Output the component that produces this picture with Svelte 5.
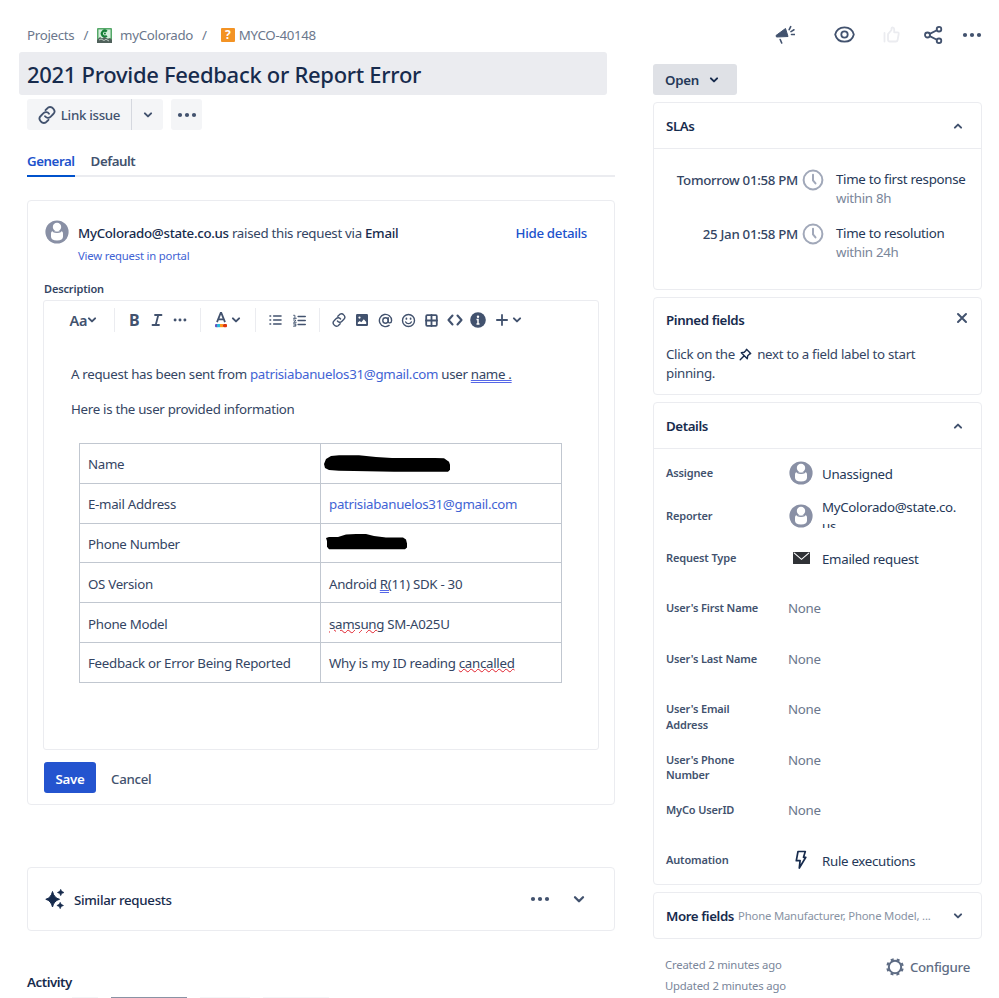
<script>
    const rows = [
        { label: 'Name', redacted: 'name' },
        { label: 'E-mail Address', mail: 'patrisiabanuelos31@gmail.com' },
        { label: 'Phone Number', redacted: 'phone' },
        { label: 'OS Version', before: 'Android ', grammar: 'R(', after: '11) SDK - 30' },
        { label: 'Phone Model', spelling: 'samsung', after: ' SM-A025U' },
        { label: 'Feedback or Error Being Reported', before: 'Why is my ID reading ', spelling: 'cancalled' }
    ];

    const slas = [
        { due: 'Tomorrow 01:58 PM', name: 'Time to first response', goal: 'within 8h' },
        { due: '25 Jan 01:58 PM', name: 'Time to resolution', goal: 'within 24h' }
    ];

    const details = [
        { label: 'Assignee', value: 'Unassigned', icon: 'avatar', short: true },
        { label: 'Reporter', value: 'MyColorado@state.co.us', icon: 'avatar', short: true, clipped: true },
        { label: 'Request Type', value: 'Emailed request', icon: 'mail' },
        { label: "User's First Name" },
        { label: "User's Last Name" },
        { label: "User's Email Address" },
        { label: "User's Phone Number" },
        { label: 'MyCo UserID' },
        { label: 'Automation', value: 'Rule executions', icon: 'bolt' }
    ];
</script>

{#snippet chevron(up = false)}
    <svg class="icon chevron" class:up width="10" height="8" viewBox="0 0 10 8"><path d="M1.9 2.4 5 5.4l3.1-3" /></svg>
{/snippet}

{#snippet dots(w = 20)}
    <svg width={w} height="6" viewBox="0 0 20 6" fill="currentColor"><circle cx="3" cy="3" r="2.1" /><circle cx="10" cy="3" r="2.1" /><circle cx="17" cy="3" r="2.1" /></svg>
{/snippet}

{#snippet avatar()}
    <svg width="24" height="24" viewBox="0 0 24 24">
        <circle cx="12" cy="12" r="11.6" fill="#8990a5" />
        <circle cx="12" cy="7" r="4.2" fill="#fff" />
        <path d="M6 13.2q0-1.9 1.9-1.9h8.2q1.9 0 1.9 1.9v3.6Q18 20.5 12 20.5T6 16.8z" fill="#fff" />
        <path d="M8 11.400Q12 13.200 16 11.400" fill="none" stroke="#8990a5" stroke-width="1.200" />
    </svg>
{/snippet}

{#snippet link(size)}
    <svg class="icon" width={size} height={size} viewBox="0 0 18 18">
        <path d="m7.5 4.2 1.7-1.7a3.6 3.6 0 0 1 5.8-.1l.6.7a3.6 3.6 0 0 1-.3 4.9l-2.8 2.8a3.6 3.6 0 0 1-5.5-.5" />
        <path d="m10.5 13.8-1.7 1.7a3.6 3.6 0 0 1-5.8.1l-.6-.7A3.6 3.6 0 0 1 2.7 10l2.8-2.8a3.6 3.6 0 0 1 5.5.5" />
    </svg>
{/snippet}

<div class="page">
    <main>
        <nav class="crumbs">
            <span>Projects</span><span class="slash">/</span>
            <svg class="project" width="15" height="15" viewBox="0 0 15 15">
                <rect width="15" height="15" rx="1" fill="#55a868" />
                <rect x="1.5" y="1.5" width="12" height="9" fill="#d4efdc" />
                <path d="M9.800 3.500A2.900 2.900 0 1 0 9.800 7.700" fill="none" stroke="#168039" stroke-width="2.200" />
                <circle cx="7.9" cy="5.600" r="1" fill="#168039" />
                <path d="M0 12 3 9l2 1.5L7.5 9 11 11l2-1 2 2v3H0z" fill="#50615b" />
                <path d="m2 12 2-1 3 1.5 2-1.2 3 1.7" stroke="#b9c8c1" fill="none" />
            </svg>
            <span>myColorado</span><span class="slash second">/</span>
            <span class="question">?</span>
            <span>MYCO-40148</span>
        </nav>

        <h1>2021 Provide Feedback or Report Error</h1>

        <div class="actions">
            <button class="link-issue">{@render link(18)}<span>Link issue</span></button>
            <button class="split">{@render chevron()}</button>
            <button class="more">{@render dots()}</button>
        </div>

        <div class="tabs">
            <span class="tab active">General</span>
            <span class="tab">Default</span>
        </div>

        <section class="request">
            <header>
                {@render avatar()}
                <div class="raised">
                    <div class="by"><b>MyColorado@state.co.us</b> raised this request via <b>Email</b></div>
                    <div class="portal">View request in portal</div>
                </div>
                <span class="hide">Hide details</span>
            </header>

            <div class="description">Description</div>
            <div class="editor">
                <div class="toolbar">
                    <div class="cell format"><span>Aa</span>{@render chevron()}</div>
                    <i class="sep"></i>
                    <div class="cell"><span class="bold">B</span></div>
                    <div class="cell">
                        <svg class="icon" width="12" height="14" viewBox="0 0 12 14"><path d="M4 2h6.500M1.500 12H8M7.300 2 4.700 12" /></svg>
                    </div>
                    <div class="cell">{@render dots(14)}</div>
                    <i class="sep"></i>
                    <div class="cell color">
                        <svg width="12" height="16" viewBox="0 0 12 16">
                            <path d="M2 10.200 5.700 1h.6L10 10.200M3.200 7.300h5.600" fill="none" stroke="#42526e" stroke-width="1.800" />
                            <rect x="0" y="12" width="3" height="3.200" rx="1" fill="#6554c0" />
                            <rect x="2" y="12" width="3" height="3.200" fill="#2bb7d9" />
                            <rect x="5" y="12" width="3" height="3.200" fill="#ff991f" />
                            <rect x="8" y="12" width="4" height="3.200" rx="1" fill="#de350b" />
                        </svg>
                    </div>
                    <div class="cell drop a-drop">{@render chevron()}</div>
                    <i class="sep"></i>
                    <div class="cell">
                        <svg class="icon list" width="13" height="12" viewBox="0 0 13 12"><path d="M4.700 2H12M4.700 6H12M4.700 10H12M1 2h.6M1 6h.6M1 10h.6" /></svg>
                    </div>
                    <div class="cell">
                        <svg class="icon list" width="13" height="13" viewBox="0 0 13 13"><path d="M5.200 2.500h7M5.200 6.500h7M5.200 10.500h7" /><path d="M.6 1.300h1.300v3M.5 4.300h2.800M.5 6h2v1L.6 8.300h2.600M.5 9.800h2.300v2.400H.5M1.200 11h1.500" stroke-width=".9" /></svg>
                    </div>
                    <i class="sep"></i>
                    <div class="cell">{@render link(14)}</div>
                    <div class="cell">
                        <svg width="12" height="12" viewBox="0 0 12 12"><rect width="12" height="12" rx="1.200" fill="#42526e" /><circle cx="3.500" cy="3.600" r="1.100" fill="#fff" /><path d="M1.800 10V8.500L3.800 7l1.500 1.200 2.500-2.900L10.200 8v2z" fill="#fff" /></svg>
                    </div>
                    <div class="cell">
                        <svg class="icon thin" width="15" height="15" viewBox="0 0 15 15"><circle cx="7.500" cy="7.500" r="2.700" /><path d="M10.200 4.800v3.400c0 2.300 3.400 2.300 3.400-.7a6.100 6.100 0 1 0-2.500 4.900" /></svg>
                    </div>
                    <div class="cell">
                        <svg class="icon thin" width="15" height="15" viewBox="0 0 15 15"><circle cx="7.500" cy="7.500" r="6" /><path d="M4.700 9c1 2.200 4.600 2.200 5.600 0" /><path d="M5.400 5.300v.6M9.600 5.300v.6" stroke-width="1.700" /></svg>
                    </div>
                    <div class="cell">
                        <svg class="icon" width="13" height="13" viewBox="0 0 13 13"><rect x="1.200" y="1.200" width="10.600" height="10.600" rx="1" /><path d="M6.500 1v11M1 6.500h11" /></svg>
                    </div>
                    <div class="cell">
                        <svg class="icon code" width="16" height="12" viewBox="0 0 16 12"><path d="M5.500 1.500 1.500 6l4 4.500M10.500 1.500l4 4.500-4 4.500" /></svg>
                    </div>
                    <div class="cell">
                        <svg width="16" height="16" viewBox="0 0 16 16"><circle cx="8" cy="8" r="7.800" fill="#42526e" /><circle cx="8" cy="4.700" r="1.200" fill="#fff" /><path d="M6.500 7.500H8V12M6.500 12h3" fill="none" stroke="#fff" stroke-width="1.500" /></svg>
                    </div>
                    <div class="cell">
                        <svg class="icon" width="12" height="12" viewBox="0 0 12 12"><path d="M6 .9v10.200M.9 6h10.200" /></svg>
                    </div>
                    <div class="cell drop">{@render chevron()}</div>
                </div>

                <div class="content">
                    <p>A request has been sent from <span class="mail">patrisiabanuelos31@gmail.com</span> user <span class="grammar">name .</span></p>
                    <p>Here is the user provided information</p>
                    <table>
                        <tbody>
                            {#each rows as row}
                                <tr>
                                    <td>{row.label}</td>
                                    <td>
                                        {#if row.redacted === 'name'}
                                            <svg class="redact" width="126" height="18" viewBox="0 0 126 18"><path d="M0 9 2 4 7 1l8-.8h20L52 2l16 1h43l9 .2 5 3.500 1 3v5l-2 2H70L30 16l-15-.3L5 15l-4-2z" /></svg>
                                        {:else if row.redacted === 'phone'}
                                            <svg class="redact phone" width="81" height="16" viewBox="0 0 81 16"><path d="m0 4 3-1h9l8-2.500 10-.5h10l8 2 12 1.500h17l3 2 1 4v4l-2 1.700H3l-2-2.500V7z" /></svg>
                                        {:else if row.mail}
                                            <span class="mail">{row.mail}</span>
                                        {:else}
                                            {row.before ?? ''}{#if row.grammar}<span class="grammar">{row.grammar}</span>{/if}{#if row.spelling}<span class="spelling">{row.spelling}</span>{/if}{row.after ?? ''}
                                        {/if}
                                    </td>
                                </tr>
                            {/each}
                        </tbody>
                    </table>
                </div>
            </div>

            <div class="buttons">
                <button class="save">Save</button>
                <button class="cancel">Cancel</button>
            </div>
        </section>

        <section class="similar">
            <svg width="20" height="20" viewBox="0 0 20 20" fill="#172b4d">
                <path d="M7.500 2.500Q9 9 14.500 10.300 9 11.600 7.500 18 6 11.600.8 10.300 6 9 7.500 2.500z" stroke="#172b4d" stroke-linejoin="round" />
                <path d="M15.700.3q.4 2.700 3.300 3.200-2.900.5-3.300 3.200-.4-2.700-3.300-3.200 2.900-.5 3.300-3.200zM15.200 13.300q.4 2.700 3.300 3.200-2.900.5-3.300 3.200-.4-2.700-3.300-3.200 2.900-.5 3.300-3.200z" stroke="#172b4d" stroke-width=".6" />
            </svg>
            <span>Similar requests</span>
            <div class="similar-actions">
                {@render dots()}
                <svg class="icon" width="14" height="10" viewBox="0 0 14 10"><path d="m3 3.200 4 4 4-4" stroke-width="2.300" /></svg>
            </div>
        </section>

        <div class="activity">Activity</div>
        <div class="filters"><i></i><i class="selected"></i><i></i><i></i></div>
    </main>

    <aside>
        <div class="top-icons">
            <svg class="megaphone" width="20" height="20" viewBox="0 0 20 20">
                <path d="M10.500 3.500 13 11.500 1.500 12 1 10.500z" fill="#42526e" stroke="#42526e" stroke-linejoin="round" />
                <path d="m5.200 14.500 1.500 3.500M14.200 4.700 15.700 1.600M16 6.600l3-1.800M16.500 9.500h3" fill="none" stroke="#42526e" stroke-width="1.600" stroke-linecap="round" />
            </svg>
            <svg class="icon eye" width="21" height="17" viewBox="0 0 21 17"><path d="M1.200 8.500C2.300 4 6 1.300 10.500 1.300S18.700 4 19.800 8.500C18.700 13 15 15.700 10.500 15.700S2.300 13 1.200 8.500z" /><circle cx="10.500" cy="8.500" r="3.200" /></svg>
            <svg class="icon thumb" width="17" height="17" viewBox="0 0 17 17"><path d="M1.500 7v8.500M5 8.200 8.500 4V2.500q0-1.200 1.200-1.200 1.500.2 1.500 2v3h3.300q1.500.2 1.200 1.700l-1.100 6q-.3 1.500-1.600 1.500H6.700Q5 15.500 5 13.800z" /></svg>
            <svg class="icon share" width="19" height="18" viewBox="0 0 19 18"><circle cx="3.500" cy="9" r="2.500" /><circle cx="15" cy="3.200" r="2.300" /><circle cx="15" cy="14.800" r="2.300" /><path d="m5.700 7.900 7.200-3.600M5.700 10.100l7.200 3.600" /></svg>
            {@render dots()}
        </div>

        <button class="status">Open {@render chevron()}</button>

        <section class="panel slas">
            <div class="panel-head"><h2>SLAs</h2>{@render chevron(true)}</div>
            <div class="sla-list">
                {#each slas as sla}
                    <div class="sla">
                        <span class="due">{sla.due}</span>
                        <svg width="22" height="22" viewBox="0 0 22 22" fill="none" stroke="#a1a8b9"><circle cx="11" cy="11" r="9.400" stroke-width="2" /><path d="M11 5.800v5.600l2.500 3" stroke-width="2" stroke-linecap="round" /></svg>
                        <div class="goal"><div>{sla.name}</div><div class="within">{sla.goal}</div></div>
                    </div>
                {/each}
            </div>
        </section>

        <section class="panel pinned">
            <div class="pinned-head">
                <h2>Pinned fields</h2>
                <svg class="icon" width="12" height="12" viewBox="0 0 12 12"><path d="m2 2 8 8M10 2l-8 8" stroke-width="2" /></svg>
            </div>
            <p>Click on the <svg class="icon pin" width="13" height="13" viewBox="0 0 13 13"><path d="M7.500 1.300 11.700 5.500 10.600 6 8.700 7.800 8.300 10.700 2.300 4.700 5.200 4.300 7 2.400zM5.200 7.800 1.200 11.800" /></svg> next to a field label to start pinning.</p>
        </section>

        <section class="panel details">
            <div class="panel-head"><h2>Details</h2>{@render chevron(true)}</div>
            {#each details as field}
                <div class="field" class:short={field.short}>
                    <span class="label">{field.label}</span>
                    {#if field.value}
                        <span class="field-icon">
                            {#if field.icon === 'avatar'}
                                {@render avatar()}
                            {:else if field.icon === 'mail'}
                                <svg width="17" height="12" viewBox="0 0 17 12"><rect width="17" height="12" rx=".6" fill="#303236" /><path d="m1 .8 7.500 6.500L16 .8" fill="none" stroke="#fff" stroke-width="1.100" /></svg>
                            {:else}
                                <svg width="12" height="20" viewBox="0 0 12 20"><path d="M3 1.500h7.300L8.500 7.300h2.300L4.300 18l.8-7.300H1.300z" fill="none" stroke="#172b4d" stroke-width="1.700" stroke-linejoin="round" /></svg>
                            {/if}
                        </span>
                        <span class="value" class:clipped={field.clipped}>{field.value}</span>
                    {:else}
                        <span class="none">None</span>
                    {/if}
                </div>
            {/each}
        </section>

        <section class="panel more-fields">
            <h2>More fields</h2>
            <span>Phone Manufacturer, Phone Model, ...</span>
            {@render chevron()}
        </section>

        <footer>
            <div class="stamps"><div>Created 2 minutes ago</div><div>Updated 2 minutes ago</div></div>
            <div class="configure">
                <svg width="18" height="18" viewBox="0 0 18 18"><circle cx="9" cy="9" r="6.200" fill="none" stroke="#5e6c84" stroke-width="2" /><circle cx="9" cy="9" r="7.700" fill="none" stroke="#5e6c84" stroke-width="2.200" stroke-dasharray="3 3.047" stroke-dashoffset="-1.500" /></svg>
                <span>Configure</span>
            </div>
        </footer>
    </aside>
</div>

<style>
    :global(body) {
        background: #fff;
        overflow: hidden;
    }

    .page {
        display: flex;
        gap: 38px;
        width: 999px;
        height: 998px;
        overflow: hidden;
        box-sizing: border-box;
        padding-left: 27px;
        font-family: "Noto Sans", "Open Sans", sans-serif;
        font-size: 13.3px;
        letter-spacing: -0.3px;
        color: #344563;
    }

    .page * {
        box-sizing: border-box;
    }

    main {
        width: 588px;
        flex: none;
        display: flex;
        flex-direction: column;
    }

    main > :global(*) {
        flex-shrink: 0;
    }

    svg {
        display: block;
        flex: none;
    }

    button {
        border: 0;
        margin: 0;
        padding: 0;
        font: inherit;
        letter-spacing: inherit;
        background: #f4f5f7;
        color: #42526e;
        display: flex;
        align-items: center;
        justify-content: center;
    }

    h1,
    h2,
    p {
        margin: 0;
    }

    .icon {
        fill: none;
        stroke: #42526e;
        stroke-width: 1.8;
        stroke-linecap: round;
        stroke-linejoin: round;
    }

    .chevron {
        stroke-width: 2;
    }

    .list {
        stroke-width: 1.6;
    }

    .up {
        transform: rotate(180deg);
    }

    .crumbs {
        height: 52px;
        padding-top: 18px;
        display: flex;
        align-items: center;
        color: #6b778c;
    }

    .slash {
        margin: 0 9px;
    }

    .project {
        margin-right: 8px;
    }

    .second {
        margin-right: 14px;
    }

    .question {
        width: 14px;
        height: 14px;
        margin-right: 4px;
        border-radius: 1px;
        background: #f39324;
        color: #fff;
        font-weight: 700;
        font-size: 12px;
        line-height: 14px;
        text-align: center;
    }

    h1 {
        width: 588px;
        height: 43px;
        margin-left: -8px;
        padding-left: 8px;
        border-radius: 3px;
        background: #ebecf0;
        color: #172b4d;
        font-size: 22px;
        font-weight: 500;
        line-height: 45px;
        letter-spacing: -0.3px;
    }

    .actions {
        display: flex;
        height: 31px;
        margin-top: 4px;
        font-weight: 500;
    }

    .link-issue {
        width: 104px;
        gap: 5px;
        border-radius: 3px 0 0 3px;
    }

    .split {
        width: 32px;
        border-left: 1px solid #d5d8df;
        border-radius: 0 3px 3px 0;
    }

    .more {
        width: 31px;
        margin-left: 8px;
        border-radius: 3px;
    }

    .tabs {
        display: flex;
        gap: 16px;
        height: 32px;
        margin-top: 15px;
        border-bottom: 2px solid #ebecf0;
        font-weight: 600;
        line-height: 33px;
        letter-spacing: -0.45px;
        color: #42526e;
    }

    .active {
        height: 32px;
        border-bottom: 2px solid #0052cc;
        color: #2052cc;
    }

    .request {
        height: 605px;
        margin-top: 23px;
        padding: 19px 16px 0;
        border: 1px solid #ebecf0;
        border-radius: 4px;
    }

    .request header {
        display: flex;
        height: 61px;
        padding: 0 11px 0 1px;
    }

    .raised {
        flex: 1;
        padding: 1px 0 0 9px;
        line-height: 25px;
    }

    .by b {
        font-weight: 500;
        color: #172b4d;
    }

    .portal {
        font-size: 11.3px;
        letter-spacing: -0.2px;
        line-height: 20px;
        color: #3f63d4;
    }

    .hide {
        padding-top: 1px;
        line-height: 25px;
        font-weight: 500;
        color: #2052cc;
    }

    .description {
        height: 19px;
        font-size: 11px;
        letter-spacing: -0.15px;
        font-weight: 600;
        line-height: 16px;
    }

    .editor {
        width: 556px;
        height: 450px;
        margin-left: -1px;
        border: 1px solid #ebecf0;
        border-radius: 3px;
    }

    .toolbar {
        display: flex;
        align-items: center;
        height: 38px;
        padding-left: 25.5px;
        color: #42526e;
    }

    .cell {
        display: flex;
        align-items: center;
        justify-content: center;
        flex: none;
        width: 23.2px;
    }

    .format {
        width: 36px;
        justify-content: flex-start;
        font-size: 14.5px;
        line-height: 18px;
        font-weight: 600;
    }

    .sep {
        flex: none;
        width: 1px;
        height: 24px;
        margin: 0 8px;
        background: #ebecf0;
    }

    .bold {
        font-size: 16px;
        line-height: 18px;
        font-weight: 700;
    }

    .drop {
        width: 15px;
        margin-left: -4px;
    }

    .a-drop {
        margin-right: 4px;
    }

    .thin {
        stroke-width: 1.4;
    }

    .code {
        stroke-width: 2.1;
    }

    .content {
        padding: 25px 27px 0;
        color: #344563;
    }

    .content p {
        height: 35px;
        line-height: 20px;
    }

    .mail {
        color: #3f63d4;
    }

    .grammar {
        text-decoration: underline double #5567e8;
        text-decoration-thickness: 1px;
        text-underline-offset: 1px;
    }

    .spelling {
        text-decoration: underline wavy #e0202c;
        text-decoration-thickness: 1px;
        text-underline-offset: 0;
    }

    table {
        width: 483px;
        margin: 9px 0 0 8px;
        border-collapse: collapse;
        table-layout: fixed;
    }

    td {
        height: 39.8px;
        padding: 2px 8px 0;
        border: 1px solid #c1c7d0;
        vertical-align: middle;
    }

    .redact {
        margin: 0 0 0 -5px;
    }

    .phone {
        margin: -3px 0 0 -3px;
    }

    .buttons {
        display: flex;
        margin-top: 12px;
        height: 31px;
        font-weight: 500;
    }

    .buttons button {
        padding-top: 2px;
    }

    .save {
        width: 52px;
        border-radius: 3px;
        background: #2454cf;
        color: #fff;
        font-weight: 600;
    }

    .cancel {
        margin-left: 15px;
        background: none;
    }

    .similar {
        display: flex;
        align-items: center;
        height: 64px;
        margin-top: 62px;
        padding: 0 28px 0 17px;
        border: 1px solid #ebecf0;
        border-radius: 4px;
        font-weight: 500;
        color: #172b4d;
    }

    .similar span {
        margin-left: 9px;
        padding-top: 2px;
    }

    .similar-actions {
        display: flex;
        align-items: center;
        gap: 22px;
        margin-left: auto;
        color: #42526e;
    }

    .activity {
        height: 65px;
        padding-top: 41px;
        font-weight: 600;
        letter-spacing: -0.45px;
        line-height: 20px;
        color: #172b4d;
    }

    .filters {
        display: flex;
        gap: 13px;
        height: 2px;
        padding-left: 45px;
        margin-top: 1px;
    }

    .filters i {
        width: 50px;
        background: #f4f5f7;
    }

    .filters i:first-child {
        width: 26px;
    }

    .filters i:last-child {
        width: 66px;
    }

    .filters .selected {
        width: 76px;
        background: #8993a4;
    }

    aside {
        width: 329px;
        flex: none;
        display: flex;
        flex-direction: column;
    }

    .top-icons {
        display: flex;
        align-items: center;
        height: 64px;
        padding: 5px 0 0 122px;
        color: #42526e;
    }

    .eye {
        margin-left: 39px;
    }

    .thumb {
        margin-left: 28px;
        stroke: #ebecf0;
    }

    .share {
        margin: 0 19px 0 24px;
    }

    .status {
        width: 84px;
        height: 31px;
        gap: 10px;
        padding-top: 1px;
        padding-right: 6px;
        border-radius: 3px;
        background: #dfe1e6;
        color: #253858;
        font-weight: 600;
    }

    .status .chevron {
        stroke: #172b4d;
    }

    .panel {
        width: 329px;
        border: 1px solid #ebecf0;
        border-radius: 4px;
    }

    .panel-head {
        display: flex;
        align-items: center;
        justify-content: space-between;
        height: 46px;
        padding: 0 18px 0 12px;
        border-bottom: 1px solid #ebecf0;
    }

    h2 {
        font-size: 13.3px;
        font-weight: 600;
        letter-spacing: -0.4px;
        color: #172b4d;
        line-height: 20px;
    }

    .panel-head h2 {
        padding-top: 1px;
    }

    .slas {
        height: 188px;
        margin-top: 7px;
    }

    .sla-list {
        padding-top: 20px;
    }

    .sla {
        display: flex;
        height: 54px;
        line-height: 19.4px;
    }

    .due {
        width: 144px;
        padding-top: 2px;
        text-align: right;
        font-weight: 500;
        white-space: nowrap;
    }

    .sla svg {
        margin: 0 12px 0 4px;
    }

    .goal {
        padding-top: 1px;
        white-space: nowrap;
        color: #253858;
    }

    .within {
        color: #7a869a;
    }

    .pinned {
        height: 98px;
        margin-top: 7px;
        padding: 12px 13px 0 12px;
    }

    .pinned-head {
        display: flex;
        justify-content: space-between;
        height: 35px;
    }

    .pinned-head svg {
        margin-top: 2px;
    }

    .pinned p {
        width: 270px;
        line-height: 19.4px;
    }

    .pin {
        display: inline-block;
        vertical-align: -2px;
        margin: 0 2px 0 1px;
        stroke: #172b4d;
        stroke-width: 1.4;
    }

    .details {
        height: 483px;
        margin-top: 7px;
    }

    .field {
        display: flex;
        height: 50.4px;
        padding: 16px 0 0 12px;
    }

    .short {
        height: 42.5px;
    }

    .label {
        width: 122px;
        padding-right: 26px;
        font-size: 11px;
        letter-spacing: -0.15px;
        font-weight: 600;
        line-height: 15.5px;
        color: #42526e;
    }

    .field-icon {
        display: flex;
        align-items: center;
        justify-content: center;
        width: 26px;
        height: 24px;
        margin-top: -4px;
    }

    .value {
        width: 138px;
        margin-left: 8px;
        line-height: 19px;
        color: #253858;
        word-break: break-all;
    }

    .clipped {
        height: 30px;
        margin-top: -10px;
        overflow: hidden;
    }

    .none {
        line-height: 17px;
        color: #6b778c;
    }

    .more-fields {
        display: flex;
        align-items: center;
        height: 47px;
        margin-top: 7px;
        padding: 0 18px 0 12px;
    }

    .more-fields span {
        margin-left: 4px;
        font-size: 11.3px;
        letter-spacing: -0.18px;
        color: #8993a4;
    }

    .more-fields svg {
        margin-left: auto;
    }

    footer {
        display: flex;
        justify-content: space-between;
        padding: 15px 12px 0;
    }

    .stamps {
        font-size: 11.3px;
        letter-spacing: -0.18px;
        line-height: 21.3px;
        color: #7a869a;
    }

    .configure {
        display: flex;
        align-items: center;
        gap: 6px;
        height: 26px;
        font-weight: 500;
        color: #5e6c84;
    }
</style>
